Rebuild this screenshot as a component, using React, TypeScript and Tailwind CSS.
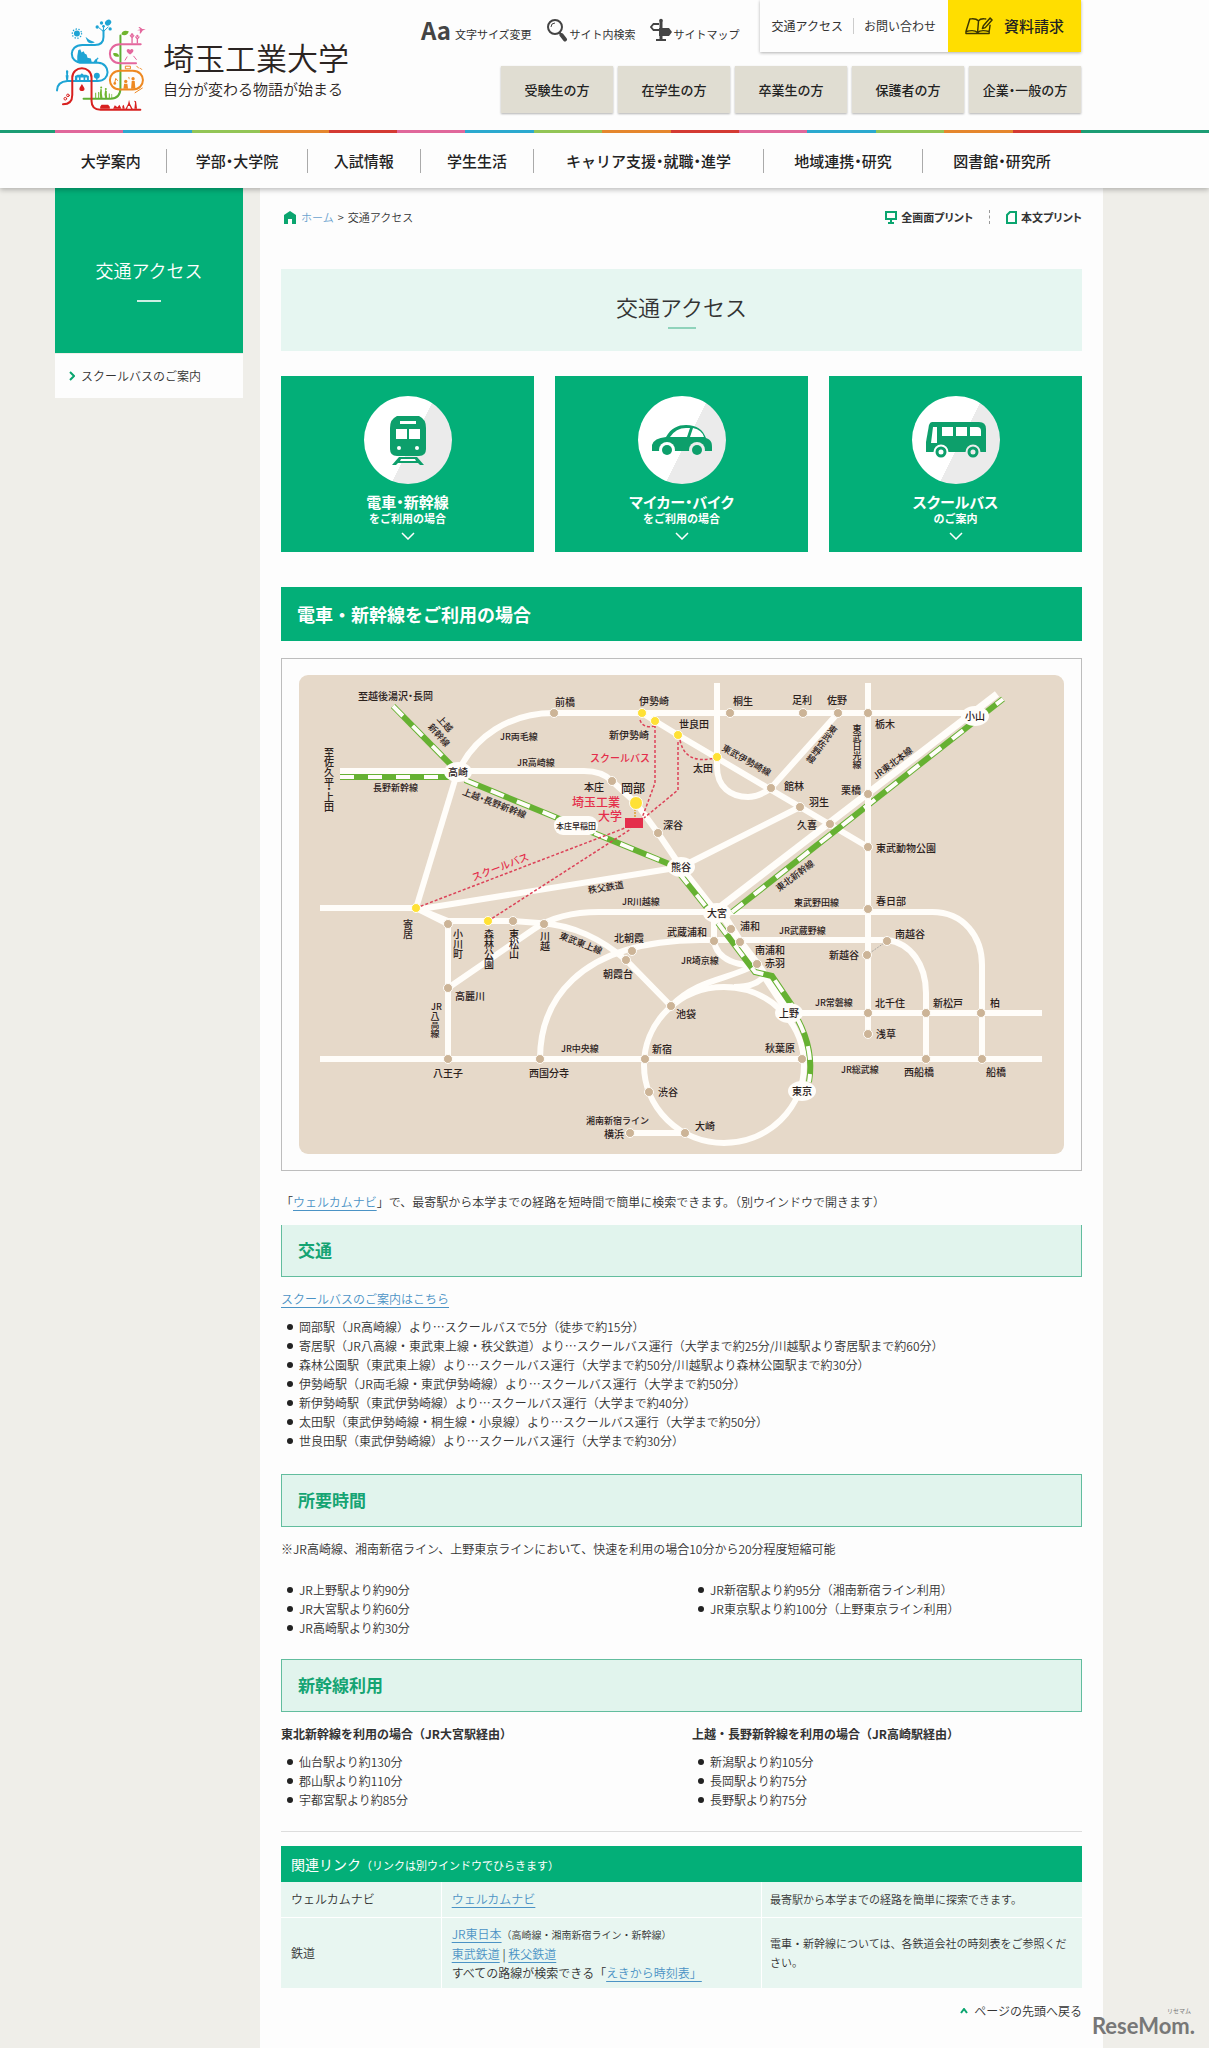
import type { ReactNode } from 'react'

type Point = [number, number]

const stripe = [
  'bg-[#e0679b]',
  'bg-[#2ba9cf]',
  'bg-[#93c556]',
  'bg-[#e5862d]',
  'bg-[#d43a33]',
]

const audiences = ['受験生の方', '在学生の方', '卒業生の方', '保護者の方', '企業・一般の方']

const navItems = [
  { label: '大学案内', size: 'grow-[112]' },
  { label: '学部・大学院', size: 'grow-[140]' },
  { label: '入試情報', size: 'grow-[113]' },
  { label: '学生生活', size: 'grow-[113]' },
  { label: 'キャリア支援・就職・進学', size: 'grow-[230]' },
  { label: '地域連携・研究', size: 'grow-[159]' },
  { label: '図書館・研究所', size: 'grow-[159]' },
]

const busRoutes = [
  '岡部駅（JR高崎線）より…スクールバスで5分（徒歩で約15分）',
  '寄居駅（JR八高線・東武東上線・秩父鉄道）より…スクールバス運行（大学まで約25分/川越駅より寄居駅まで約60分）',
  '森林公園駅（東武東上線）より…スクールバス運行（大学まで約50分/川越駅より森林公園駅まで約30分）',
  '伊勢崎駅（JR両毛線・東武伊勢崎線）より…スクールバス運行（大学まで約50分）',
  '新伊勢崎駅（東武伊勢崎線）より…スクールバス運行（大学まで約40分）',
  '太田駅（東武伊勢崎線・桐生線・小泉線）より…スクールバス運行（大学まで約50分）',
  '世良田駅（東武伊勢崎線）より…スクールバス運行（大学まで約30分）',
]

function Logo() {
  return (
    <svg viewBox="45 55 280 285" className="w-[93px] shrink-0" fill="none" strokeWidth="6" strokeLinecap="round" aria-hidden="true">
      <g stroke="#1ea4d4">
        <path d="M191 92v20q0 24-26 24h-38c-42 0-42 54 0 54h48c38 2 38 55-2 55H82q-30 2-31 28" />
        <path d="M191 96l-14-12M191 96l14-14M191 92V78" strokeWidth="3" />
      </g>
      <g fill="#1ea4d4">
        <circle cx="111" cy="102" r="9" />
        <circle cx="111" cy="102" r="14" stroke="#1ea4d4" strokeWidth="4" fill="none" strokeDasharray="1 7.8" />
        <ellipse cx="205" cy="69" rx="10" ry="8" transform="rotate(-40 205 69)" />
        <circle cx="185" cy="70" r="5" />
        <circle cx="172" cy="82" r="5" />
        <circle cx="211" cy="88" r="5" />
        <circle cx="191" cy="80" r="4" />
        <path d="M137 112c6 2 8 8 14 10l14 6c-8 5-22 4-24-6z" />
        <path d="M112 190v-20l3-18 6-3 4 10 6-4 4 8 5 2 3 10 10 2 3 13zM160 190c4-8 6-12 12-14l2-3 2 5-4 3v9z" />
        <path d="M105 242v-12l8-4h8l5-5 5 5h8l8 4v12h-6v-8h-5v8h-5v-8h-9v8h-5v-8h-5v8z" />
        <circle cx="171" cy="229" r="9" />
        <path d="M169 229h4v14h-4zM81 211l4 4-1 12h2l-2 17h-5l-2-17h2l-1-12z" />
      </g>
      <g stroke="#5fae35">
        <path d="M242 108v158q0 32-30 32h-81" />
      </g>
      <g fill="#6fb52e">
        <path d="M245 105c0-12 12-14 22-10-2 11-12 15-22 10zM238 171c-12 3-18-2-18-10 10-3 18 1 18 10z" />
        <path d="M166 280h3v16h-3zM175 278h3v18h-3zM182 268l4 2v12l2 14h-7l-1-14zM196 272l5 3v10l1 11h-6l-2-11zM207 282h3v14h-3zM215 284h2v12h-2z" />
        <circle cx="184" cy="264" r="3" />
        <circle cx="198" cy="269" r="3" />
      </g>
      <g stroke="#e4679d">
        <path d="M303 134h-62c-41 0-41 57 0 57h48" />
        <path d="M272 108l5 6 5-6M277 114v16M288 112l5 6 5-6M293 118v12" strokeWidth="4" />
        <path d="M256 182l6-10M282 170l8 10" strokeWidth="3" />
      </g>
      <g fill="#e4679d">
        <path d="M271 165c-18-10-8-22 0-14 8-8 18 4 0 14zM292 92l10-3-6-7 4 0 8 6 10 1-9 4-6 9h-3l1-9z" />
        <circle cx="277" cy="105" r="4" />
        <circle cx="293" cy="109" r="3.5" />
      </g>
      <g stroke="#ee8922">
        <path d="M279 270h-38c-41 0-41-56 0-56h38c41 0 41 56 0 56z" />
        <path d="M286 280l22-14M258 200h14v8h-14zM291 200l6 6M302 206l4 4M224 253l4-16 5 6" strokeWidth="3" />
      </g>
      <g fill="#ee8922">
        <circle cx="225" cy="252" r="4" />
        <circle cx="258" cy="246" r="5" />
        <circle cx="280" cy="238" r="5" />
        <path d="M253 253h10l2 15h-14zM276 245h9l2 23h-13zM265 232l5 3-2 6z" />
      </g>
      <g stroke="#d8201f">
        <path d="M69 315c20 0 28-10 28-28v-52c0-38 58-38 58 0v70q0 26 27 26h120" />
        <circle cx="76" cy="298" r="4" strokeWidth="3" />
        <circle cx="84" cy="288" r="4" strokeWidth="3" />
      </g>
      <g fill="#d8201f">
        <path d="M126 254l5 8c6 8 2 13-5 13s-10-6-5-13zM181 328v-6l4-6h20l5 6v6zM220 328l5-10 8 6 6-8 6 12zM248 320l4-4 3 12h-7zM257 329l8-15 3-13 3 13 8 15h-5l-4-9h-5l-3 9zM284 328l2-18-3-6 6 2 3 22z" />
      </g>
    </svg>
  )
}

function SearchIcon() {
  return (
    <svg viewBox="0 0 22 24" className="w-[22px]" fill="none" aria-hidden="true">
      <circle cx="9" cy="9" r="7" stroke="#444" strokeWidth="2" />
      <path d="M5 9q0-4 4-4" stroke="#444" strokeWidth="1" />
      <path d="M13 14l2.500 3" stroke="#444" strokeWidth="2" />
      <path d="M15.500 17l3.500 4.500" stroke="#444" strokeWidth="4" strokeLinecap="round" />
    </svg>
  )
}

function SignIcon() {
  return (
    <svg viewBox="0 0 22 24" className="w-[22px]" aria-hidden="true">
      <circle cx="11" cy="2.500" r="1.800" fill="#444" />
      <path d="M9.500 3h3v19h-3zM6 21h10v2H6z" fill="#444" />
      <path d="M9 6H3.500L1 9l2.500 3H9" fill="#fff" stroke="#444" strokeWidth="1.800" />
      <path d="M9 10h10l3 4-3 4H9z" fill="#444" />
    </svg>
  )
}

function BookIcon() {
  return (
    <svg viewBox="0 0 30 19" className="w-[29px]" fill="none" stroke="#3b3500" strokeWidth="1.500" strokeLinejoin="round" aria-hidden="true">
      <path d="M14 4C11 1 8 2 5 2L1 15c4-1 9-2 12 1 3-3 8-2 12-1l1-7M14 4c2-3 5-2 8-2M14 4l-1 12M1 15v2h24v-2" />
      <path d="M18 12l1-3 7-8 2 2-7 8z" />
    </svg>
  )
}

function TrainIcon() {
  return (
    <svg viewBox="0 0 88 88" className="w-full" aria-hidden="true">
      <path d="M33 20h22q7 3 7 12v21q0 7-7 7H33q-7 0-7-7V32q0-9 7-12z" fill="#0d9f6b" />
      <path d="M36 25h16v3H36zM32 33h11v10H32zM45 33h11v10H45z" fill="#fff" />
      <circle cx="35" cy="52" r="2" fill="#fff" />
      <circle cx="53" cy="52" r="2" fill="#fff" />
      <path d="M35 61h18l7 8h-4l-2-2H34l-2 2h-4z" fill="#0d9f6b" />
      <path d="M37 63h14l1 2H36z" fill="#fff" />
    </svg>
  )
}

function CarIcon() {
  return (
    <svg viewBox="0 0 88 88" className="w-full" aria-hidden="true">
      <path d="M14 55v-6q2-7 14-8c5-9 12-12 20-12 11 0 17 5 20 13 5 2 6 4 6 9v4H14z" fill="#0d9f6b" />
      <path d="M32 41q6-9 16-9h4l-3 9zM55 32q9 2 11 9H52z" fill="#fff" />
      <circle cx="29" cy="54" r="8" fill="#fff" />
      <circle cx="59" cy="54" r="8" fill="#ececec" />
      <circle cx="29" cy="54" r="5" fill="#0d9f6b" />
      <circle cx="59" cy="54" r="5" fill="#0d9f6b" />
    </svg>
  )
}

function BusIcon() {
  return (
    <svg viewBox="0 0 88 88" className="w-full" aria-hidden="true">
      <path d="M20 26h47q7 0 7 7v23H14V46l3-17q1-3 3-3z" fill="#0d9f6b" />
      <path d="M21 31h4v16h-6zM30 31h11v9H30zM44 31h11v9H44zM58 31h7q4 0 4 4v5H58z" fill="#fff" />
      <circle cx="29" cy="56" r="7.500" fill="#fff" />
      <circle cx="61" cy="56" r="7.500" fill="#ececec" />
      <circle cx="29" cy="56" r="4" fill="#fff" stroke="#0d9f6b" strokeWidth="3" />
      <circle cx="61" cy="56" r="4" fill="#ececec" stroke="#0d9f6b" strokeWidth="3" />
    </svg>
  )
}

function AccessCard({ title, sub, children }: { title: string; sub: string; children: ReactNode }) {
  return (
    <a href="#" className="flex h-[176px] flex-col items-center bg-[#03af78] pt-5 font-bold text-white">
      <span className="size-[88px] overflow-hidden rounded-full bg-[linear-gradient(117deg,#fff_54%,#ebebeb_54%)]">
        {children}
      </span>
      <span className="mt-2 text-[15px] leading-5 [font-feature-settings:'palt']">{title}</span>
      <span className="text-[11px] leading-3">{sub}</span>
      <svg viewBox="0 0 14 8" className="mt-2 w-[14px]" fill="none" stroke="#fff" strokeWidth="1.500" aria-hidden="true">
        <path d="M1 1l6 6 6-6" />
      </svg>
    </a>
  )
}

function SubHeading({ children, open }: { children: ReactNode; open?: boolean }) {
  return (
    <h3
      className={`flex items-center border border-[#62bd9e] bg-[#e1f4ed] pl-4 text-[17px] font-bold text-[#15a473] ${open ? 'h-[52px] border-t-0' : 'h-[53px]'}`}
    >
      {children}
    </h3>
  )
}

function Bullets({ items }: { items: string[] }) {
  return (
    <ul>
      {items.map((item) => (
        <li key={item} className="flex gap-1.5 pl-1.5 leading-[19px]">
          <span className="mt-[7px] size-1.5 shrink-0 rounded-full bg-[#222]" />
          {item}
        </li>
      ))}
    </ul>
  )
}

function TextLink({ children }: { children: ReactNode }) {
  return (
    <a href="#" className="text-[#4b93c5] underline underline-offset-3">
      {children}
    </a>
  )
}

const stations: Point[] = [
  [255, 38], [431, 38], [504, 38], [539, 38], [569, 38], [472, 113], [501, 132], [531, 149],
  [569, 119], [569, 172], [569, 234], [313, 106], [359, 158], [149, 249], [214, 246], [245, 249],
  [149, 313], [149, 384], [241, 384], [333, 276], [327, 285], [372, 331], [346, 384], [350, 417],
  [386, 458], [331, 458], [432, 254], [415, 266], [441, 267], [458, 289], [503, 384], [588, 266],
  [568, 280], [569, 338], [569, 359], [627, 338], [682, 338], [627, 384], [683, 384],
]

const busStops: Point[] = [[343, 38], [356, 46], [379, 60], [418, 82], [117, 233], [189, 246]]

const hubs: [string, number, number][] = [
  ['高崎', 159, 97],
  ['熊谷', 382, 192],
  ['大宮', 418, 238],
  ['小山', 676, 41],
  ['上野', 490, 338],
  ['東京', 503, 416],
]

const stationNames: [string, number, number][] = [
  ['至越後湯沢・長岡', 59, 20], ['前橋', 256, 26], ['伊勢崎', 340, 25], ['新伊勢崎', 310, 59],
  ['世良田', 380, 48], ['桐生', 434, 25], ['足利', 493, 24], ['佐野', 528, 24], ['栃木', 576, 48],
  ['太田', 394, 92], ['館林', 485, 110], ['羽生', 510, 126], ['栗橋', 542, 114], ['久喜', 498, 149],
  ['東武動物公園', 577, 172], ['春日部', 577, 225], ['本庄', 285, 111], ['深谷', 364, 149],
  ['高麗川', 156, 320], ['八王子', 134, 397], ['西国分寺', 230, 397], ['新宿', 353, 373],
  ['渋谷', 359, 416], ['横浜', 305, 458], ['大崎', 396, 450], ['池袋', 377, 338], ['北朝霞', 315, 262],
  ['朝霞台', 304, 298], ['武蔵浦和', 368, 256], ['浦和', 441, 250], ['南浦和', 456, 274],
  ['赤羽', 466, 287], ['南越谷', 596, 258], ['新越谷', 530, 279], ['北千住', 576, 327],
  ['新松戸', 634, 327], ['柏', 691, 327], ['浅草', 577, 358], ['秋葉原', 466, 372],
  ['西船橋', 605, 396], ['船橋', 687, 396],
]

const lineNames: [string, number, number, number][] = [
  ['JR両毛線', 201, 61, 0], ['JR高崎線', 218, 87, 0], ['長野新幹線', 74, 112, 0],
  ['JR川越線', 323, 226, 0], ['JR中央線', 262, 373, 0], ['湘南新宿ライン', 287, 445, 0],
  ['JR埼京線', 382, 285, 0], ['JR武蔵野線', 480, 255, 0], ['東武野田線', 495, 227, 0],
  ['JR常磐線', 516, 327, 0], ['JR総武線', 542, 394, 0], ['JR', 132, 331, 0],
  ['秩父鉄道', 289, 215, -9], ['上越・長野新幹線', 164, 116, 21], ['上越', 140, 42, 48],
  ['新幹線', 131, 50, 48], ['東武東上線', 261, 260, 21], ['東武伊勢崎線', 424, 72, 29],
  ['JR東北本線', 575, 102, -37], ['東北新幹線', 478, 214, -37],
]

const verticalNames: [string, number, number, string][] = [
  ['至佐久平・上田', 30, 72, 'text-[10px]'],
  ['寄居', 109, 244, 'text-[10px]'],
  ['小川町', 159, 254, 'text-[10px]'],
  ['森林公園', 190, 254, 'text-[10px]'],
  ['東松山', 215, 254, 'text-[10px]'],
  ['川越', 246, 256, 'text-[10px]'],
  ['八高線', 136, 336, 'text-[9px]'],
  ['東武日光線', 558, 49, 'text-[9px]'],
]

function Shinkansen({ d }: { d: string }) {
  return (
    <>
      <path d={d} stroke="#66b132" strokeWidth="6" />
      <path d={d} stroke="#fffdf9" strokeWidth="4" strokeDasharray="14 14" />
    </>
  )
}

function RailMap() {
  return (
    <svg viewBox="0 0 765 479" className="w-full rounded-[9px] bg-[#e6d9c9]" fill="none" role="img" aria-label="路線図">
      <g stroke="#fffdf9" strokeWidth="6">
        <path d="M159 97C175 62 210 38 255 38H676" />
        <path d="M41 96H285Q303 96 313 106L337 128L359 158L382 192L418 238" />
        <path d="M156 105L118 230" />
        <path d="M21 233H117L149 249M122 234L382 192L501 132" />
        <path d="M117 233L149 246H214L240 248C275 250 302 264 327 285L372 331" />
        <path d="M149 249V384M149 313L235 254Q260 237 300 237H633C665 237 683 262 683 290V384" />
        <path d="M21 384H743M490 338H743" />
        <path d="M241 384C241 330 275 266 401 265H588C612 268 627 290 627 318V384" />
        <path d="M418 8V92C418 112 432 122 449 122Q460 122 472 113L539 38" />
        <path d="M343 38L379 60L569 172" />
        <path d="M421 232L698 19" strokeWidth="7" />
        <ellipse cx="425" cy="390" rx="80" ry="78" />
        <path d="M372 331C400 303 430 305 458 289M435 312Q458 312 466 300" />
        <path d="M415 240V266C418 285 440 292 458 289" />
        <path d="M424 240L441 267L458 289L490 338" strokeWidth="8" />
        <path d="M331 458H386" />
      </g>
      <Shinkansen d="M94 31L154 92" />
      <Shinkansen d="M41 102H155" />
      <Shinkansen d="M166 105L375 191" />
      <Shinkansen d="M380 198L412 238" />
      <Shinkansen d="M433 237L704 24" />
      <Shinkansen d="M419 248L456 297L473 301L494 332" />
      <Shinkansen d="M499 345C508 362 514 384 510 407" />
      <path d="M569 8V359" stroke="#fffdf9" strokeWidth="6" />
      <path d="M568 280L588 266" stroke="#999" strokeDasharray="1 1" />

      <g stroke="#dc4258" strokeWidth="1.500" strokeDasharray="3 2">
        <path d="M117 233L326 153M189 246L332 154" />
        <path d="M356 50V108L343 143M341 45Q344 54 356 51" />
        <path d="M379 62V115L345 143M381 65Q386 90 416 83" />
      </g>
      <path d="M336 134V143" stroke="#e0a030" strokeWidth="1.500" strokeDasharray="2 1" />
      <rect x="326" y="143" width="18" height="10" fill="#e42e4b" />

      <g stroke="#fffdf9">
        {stations.map(([x, y]) => (
          <circle key={`${x}-${y}`} cx={x} cy={y} r="4.500" fill="#ccb497" />
        ))}
        {busStops.map(([x, y]) => (
          <circle key={`${x}-${y}`} cx={x} cy={y} r="4.500" fill="#ffe135" />
        ))}
        <circle cx="337" cy="128" r="6.500" fill="#ffe135" />
      </g>

      <g fill="#2b211c" dominantBaseline="central" className="text-[10px] font-medium [font-feature-settings:'halt']">
        {hubs.map(([name, x, y]) => (
          <g key={name}>
            <ellipse cx={x} cy={y} rx="14" ry="10" fill="#fffdf9" />
            <text x={x} y={y - 1} textAnchor="middle">{name}</text>
          </g>
        ))}
        <rect x="255" y="141" width="44" height="19" rx="9" fill="#fffdf9" />
        <text x="277" y="150" textAnchor="middle" className="text-[8px]">本庄早稲田</text>
        {stationNames.map(([name, x, y]) => (
          <text key={name} x={x} y={y}>{name}</text>
        ))}
        <text x="322" y="112" className="text-[12px]">岡部</text>
        <g className="text-[9px]">
          {lineNames.map(([name, x, y, angle]) => (
            <text key={name} x={x} y={y} transform={`rotate(${angle} ${x} ${y})`}>{name}</text>
          ))}
        </g>
        <g fill="#e42e4b">
          <text x="273" y="126" className="text-[12px]">埼玉工業</text>
          <text x="299" y="140" className="text-[12px]">大学</text>
          <text x="291" y="82">スクールバス</text>
          <text x="173" y="202" transform="rotate(-21 173 202)">スクールバス</text>
        </g>
      </g>
      <g fill="#2b211c" className="font-medium [font-feature-settings:'vhal'] [writing-mode:vertical-rl]">
        {verticalNames.map(([name, x, y, size]) => (
          <text key={name} x={x} y={y} className={size}>{name}</text>
        ))}
        <text x="536" y="51" transform="rotate(36 536 51)" className="text-[9px]">東武佐野線</text>
      </g>
    </svg>
  )
}

function Header() {
  return (
    <header className="relative bg-[#fdfdfd] shadow-[0_2px_5px_rgba(0,0,0,0.25)]">
      <div className="flex h-[130px] justify-between pr-[128px] pl-[55px]">
        <a href="#" className="flex items-start gap-[15px] pt-[18px]">
          <Logo />
          <span className="pt-[19px] text-[#2b2422]">
            <span className="block text-[31px] leading-10 font-[350]">埼玉工業大学</span>
            <span className="block text-[15px] leading-6 font-[350]">自分が変わる物語が始まる</span>
          </span>
        </a>
        <div className="flex flex-col items-end gap-3.5">
          <div className="flex items-start gap-5">
            <div className="flex gap-3.5 pt-[18px] text-[11px] text-[#333]">
              <button className="flex h-6 items-end gap-1">
                <span className="text-[24px] leading-6 font-bold text-[#444]">Aa</span>
                文字サイズ変更
              </button>
              <button className="flex h-6 items-end gap-0.5">
                <SearchIcon />
                サイト内検索
              </button>
              <a href="#" className="flex h-6 items-end gap-0.5">
                <SignIcon />
                サイトマップ
              </a>
            </div>
            <div className="flex h-[52px] items-stretch text-xs text-[#333] shadow-[0_1px_3px_rgba(0,0,0,0.3)]">
              <div className="flex items-center px-3">
                <a href="#" className="border-r border-[#ccc] pr-2.5">交通アクセス</a>
                <a href="#" className="pl-2.5">お問い合わせ</a>
              </div>
              <a href="#" className="flex w-[133px] items-center justify-center gap-2.5 bg-[#ffde00] text-[15px] font-medium text-[#222]">
                <BookIcon />
                資料請求
              </a>
            </div>
          </div>
          <div className="flex gap-[5px]">
            {audiences.map((name) => (
              <a
                key={name}
                href="#"
                className="flex h-[47px] w-28 items-center justify-center bg-[#e0ddd2] text-[13px] font-medium text-[#222] shadow-[0_1px_2px_rgba(0,0,0,0.3)] [font-feature-settings:'halt']"
              >
                {name}
              </a>
            ))}
          </div>
        </div>
      </div>
      <div className="flex h-[3px] bg-[#1c9d74] pr-[128px] pl-[55px]">
        {[0, 1, 2].flatMap((n) => stripe.map((color) => <span key={`${n}${color}`} className={`flex-1 ${color}`} />))}
      </div>
      <nav className="flex h-[55px] items-center pr-[128px] pl-[55px] text-[15px] font-medium text-[#222] [font-feature-settings:'halt']">
        {navItems.map(({ label, size }) => (
          <a key={label} href="#" className={`flex h-6 basis-0 items-center justify-center border-r border-[#aaa] last:border-0 ${size}`}>
            {label}
          </a>
        ))}
      </nav>
    </header>
  )
}

function RelatedLinks() {
  return (
    <table className="mt-3.5 w-full table-fixed border-collapse bg-[#e8f6f1] text-left">
      <colgroup>
        <col className="w-1/5" />
        <col className="w-2/5" />
        <col className="w-2/5" />
      </colgroup>
      <thead>
        <tr className="h-9 bg-[#03af78] text-white">
          <th colSpan={3} className="px-2.5 text-sm font-normal">
            関連リンク<span className="text-[11px]">（リンクは別ウインドウでひらきます）</span>
          </th>
        </tr>
      </thead>
      <tbody>
        <tr className="h-[35px] border-b border-white">
          <td className="border-r border-white px-2.5">ウェルカムナビ</td>
          <td className="border-r border-white px-2.5"><TextLink>ウェルカムナビ</TextLink></td>
          <td className="px-2 text-[11px]">最寄駅から本学までの経路を簡単に探索できます。</td>
        </tr>
        <tr className="h-[71px]">
          <td className="border-r border-white px-2.5">鉄道</td>
          <td className="border-r border-white px-2.5 leading-[19px]">
            <TextLink>JR東日本</TextLink>
            <span className="text-[10px]">（高崎線・湘南新宿ライン・新幹線）</span>
            <br />
            <TextLink>東武鉄道</TextLink> | <TextLink>秩父鉄道</TextLink>
            <br />
            すべての路線が検索できる「<TextLink>えきから時刻表」</TextLink>
          </td>
          <td className="px-2 text-[11px] leading-[19px]">
            電車・新幹線については、各鉄道会社の時刻表をご参照ください。
          </td>
        </tr>
      </tbody>
    </table>
  )
}

export default function App() {
  return (
    <div className="relative flex min-h-screen flex-col bg-[#efeee9] font-['Noto_Sans_CJK_JP',sans-serif] text-xs text-[#333]">
      <div className="z-10">
        <Header />
      </div>
      <div className="flex flex-1 gap-[17px] pr-[106px] pl-[55px] font-[350]">
        <aside className="w-[188px] shrink-0">
          <div className="flex h-[165px] flex-col items-center bg-[#03af78] pt-[70px] text-lg leading-6 text-white">
            交通アクセス
            <span className="mt-[18px] h-0.5 w-6 bg-white/80" />
          </div>
          <a href="#" className="mt-px flex h-11 items-center gap-1.5 bg-[#fdfdfd] pl-3.5">
            <svg viewBox="0 0 6 10" className="w-1.5" fill="none" stroke="#0aa56f" strokeWidth="2" aria-hidden="true">
              <path d="M1 1l4 4-4 4" />
            </svg>
            スクールバスのご案内
          </a>
        </aside>

        <main className="min-w-0 flex-1 bg-[#fdfdfd] px-[21px] pt-[18px] pb-[25px]">
          <div className="flex h-[22px] items-center justify-between text-[11px]">
            <div className="flex items-center gap-1">
              <svg viewBox="0 0 14 13" className="ml-0.5 w-[14px]" fill="#0aa56f" aria-hidden="true">
                <path d="M7 0l6 4v9H9V8H5v5H1V4z" />
              </svg>
              <a href="#" className="text-[#6ba3cf]">ホーム</a>
              <span>&gt;</span>
              <span>交通アクセス</span>
            </div>
            <div className="flex items-center font-bold [font-feature-settings:'palt']">
              <button className="flex items-center gap-1 border-r border-dashed border-[#999] pr-4">
                <svg viewBox="0 0 12 13" className="w-3" fill="none" stroke="#0aa56f" strokeWidth="2" aria-hidden="true">
                  <path d="M1 1h10v7H1zM6 8v4M3 12h6" />
                </svg>
                全画面プリント
              </button>
              <button className="flex items-center gap-1 pl-4">
                <svg viewBox="0 0 11 13" className="w-[11px]" fill="none" stroke="#0aa56f" strokeWidth="2" aria-hidden="true">
                  <path d="M4 1h6v11H1V4z" />
                </svg>
                本文プリント
              </button>
            </div>
          </div>

          <div className="mt-[41px] flex h-[82px] flex-col items-center bg-[#e6f6f1] pt-[21px]">
            <h1 className="text-[22px] leading-8 font-[350]">交通アクセス</h1>
            <span className="mt-[5px] h-0.5 w-7 bg-[#8fd3bb]" />
          </div>

          <div className="mt-[25px] grid grid-cols-3 gap-[21px]">
            <AccessCard title="電車・新幹線" sub="をご利用の場合"><TrainIcon /></AccessCard>
            <AccessCard title="マイカー・バイク" sub="をご利用の場合"><CarIcon /></AccessCard>
            <AccessCard title="スクールバス" sub="のご案内"><BusIcon /></AccessCard>
          </div>

          <h2 className="mt-[35px] flex h-[54px] items-center bg-[#03af78] pl-4 text-lg font-bold text-white">
            電車・新幹線をご利用の場合
          </h2>
          <div className="mt-[17px] border border-[#bdbdbd] px-[17px] py-4">
            <RailMap />
          </div>
          <p className="mt-[19px] leading-6">
            「<TextLink>ウェルカムナビ</TextLink>」で、最寄駅から本学までの経路を短時間で簡単に検索できます。（別ウインドウで開きます）
          </p>

          <section className="mt-[11px]">
            <SubHeading open>交通</SubHeading>
            <p className="mt-2.5 mb-1.5 leading-6"><TextLink>スクールバスのご案内はこちら</TextLink></p>
            <Bullets items={busRoutes} />
          </section>

          <section className="mt-6">
            <SubHeading>所要時間</SubHeading>
            <p className="mt-2.5 mb-[19px] leading-6">
              ※JR高崎線、湘南新宿ライン、上野東京ラインにおいて、快速を利用の場合10分から20分程度短縮可能
            </p>
            <div className="grid grid-cols-2 gap-[21px]">
              <Bullets items={['JR上野駅より約90分', 'JR大宮駅より約60分', 'JR高崎駅より約30分']} />
              <Bullets items={['JR新宿駅より約95分（湘南新宿ライン利用）', 'JR東京駅より約100分（上野東京ライン利用）']} />
            </div>
          </section>

          <section className="mt-[22px]">
            <SubHeading>新幹線利用</SubHeading>
            <div className="mt-2.5 grid grid-cols-2 gap-[21px]">
              <div>
                <h4 className="mb-1.5 leading-6 font-bold">東北新幹線を利用の場合（JR大宮駅経由）</h4>
                <Bullets items={['仙台駅より約130分', '郡山駅より約110分', '宇都宮駅より約85分']} />
              </div>
              <div>
                <h4 className="mb-1.5 leading-6 font-bold">上越・長野新幹線を利用の場合（JR高崎駅経由）</h4>
                <Bullets items={['新潟駅より約105分', '長岡駅より約75分', '長野駅より約75分']} />
              </div>
            </div>
          </section>

          <hr className="mt-[22px] border-[#ddd]" />
          <RelatedLinks />
          <div className="mt-[11px] flex justify-end">
            <a href="#" className="flex items-center gap-1.5 leading-6">
              <svg viewBox="0 0 8 6" className="w-2" fill="none" stroke="#0aa56f" strokeWidth="2" aria-hidden="true">
                <path d="M1 5l3-4 3 4" />
              </svg>
              ページの先頭へ戻る
            </a>
          </div>
        </main>
      </div>
      <div className="absolute right-3.5 bottom-2.5 text-right text-[#777]">
        <span className="block pr-1 text-[6px] leading-[6px]">リセマム</span>
        <span className="block font-['Lato',sans-serif] text-[22px] leading-6 font-bold">ReseMom.</span>
      </div>
    </div>
  )
}
